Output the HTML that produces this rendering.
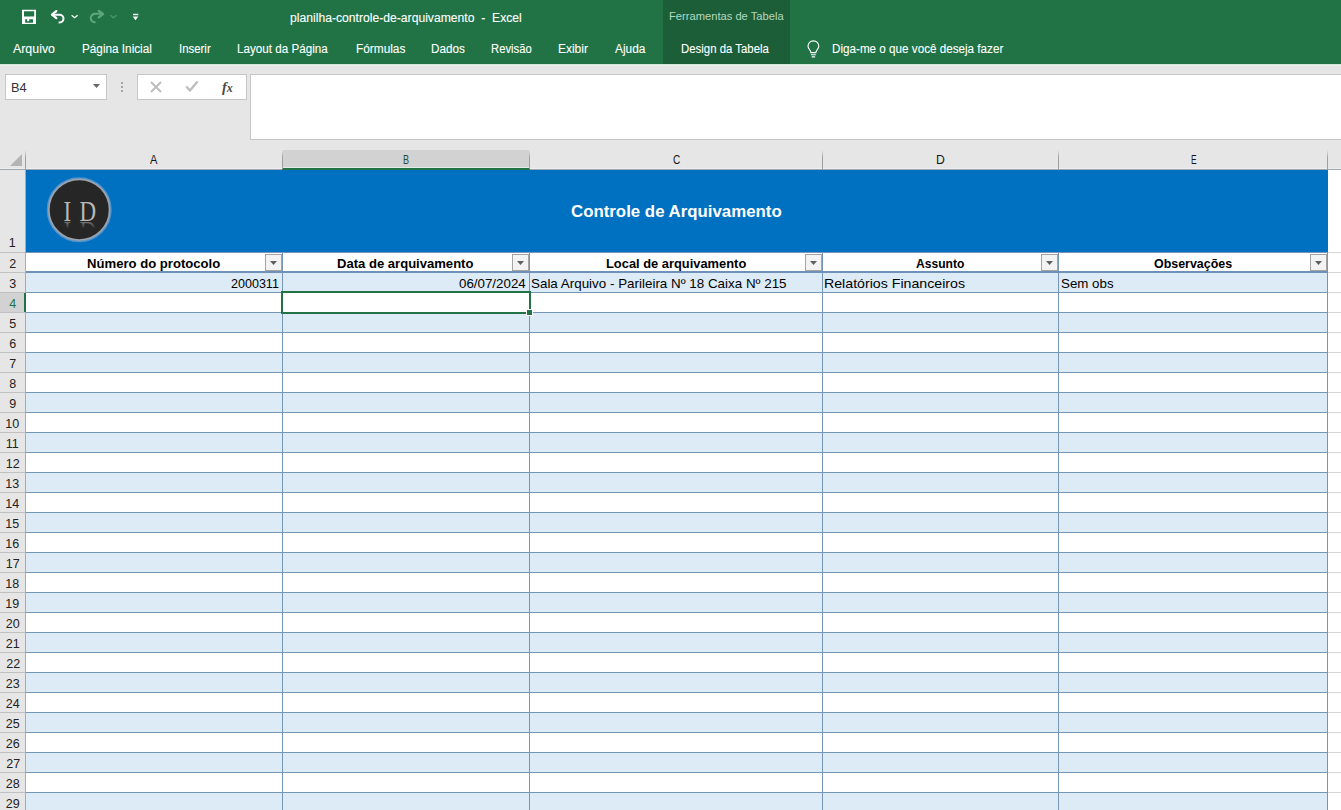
<!DOCTYPE html>
<html><head><meta charset="utf-8"><style>
*{margin:0;padding:0;box-sizing:border-box}
html,body{width:1341px;height:810px;overflow:hidden;background:#fff;font-family:"Liberation Sans",sans-serif}
.a{position:absolute}
.t{position:absolute;white-space:pre;line-height:1;transform-origin:0 0}
</style></head><body>

<div class="a" style="left:0;top:0;width:1341px;height:64px;background:#217346"></div>
<div class="a" style="left:663px;top:0;width:127px;height:64px;background:#1c5e38"></div>
<div class="a" style="left:0;top:64px;width:1341px;height:106px;background:#e6e6e6"></div>
<div class="a" style="left:0;top:64px;width:1341px;height:1px;background:#d5e6da"></div>
<div class="a" style="left:0;top:65px;width:1341px;height:1px;background:#eaefeb"></div>
<div class="a" style="left:5px;top:74px;width:102px;height:26px;background:#fff;border:1px solid #c6c6c6"></div>
<svg class="a" style="left:93px;top:84px" width="7" height="4"><path d="M0 0H7L3.5 4Z" fill="#666"/></svg>
<div class="a" style="left:121px;top:82px;width:2px;height:2px;background:#a6a6a6"></div>
<div class="a" style="left:121px;top:86px;width:2px;height:2px;background:#a6a6a6"></div>
<div class="a" style="left:121px;top:90px;width:2px;height:2px;background:#a6a6a6"></div>
<div class="a" style="left:137px;top:74px;width:110px;height:26px;background:#fff;border:1px solid #c6c6c6"></div>
<svg class="a" style="left:150px;top:81px" width="12" height="12"><path d="M1 1L11 11M11 1L1 11" stroke="#bdbdbd" stroke-width="2"/></svg>
<svg class="a" style="left:185px;top:80px" width="14" height="13"><path d="M1.2 6.5L5 10.5L12.5 1.5" stroke="#bdbdbd" stroke-width="2.4" fill="none"/></svg>
<div class="t" style="left:222px;top:79.5px;font-family:'Liberation Serif',serif;font-style:italic;font-weight:700;font-size:14.5px;color:#4a4a4a">f<span style="font-size:12px;letter-spacing:0">x</span></div>
<div class="a" style="left:250px;top:74px;width:1091px;height:66px;background:#fff;border:1px solid #c6c6c6;border-right:none"></div>
<div class="a" style="left:282px;top:150px;width:248px;height:17px;background:#d2d2d2"></div>
<div class="a" style="left:0;top:168px;width:1341px;height:1px;background:#efefef"></div>
<div class="a" style="left:0;top:169px;width:1341px;height:1px;background:#9fa6ad"></div>
<div class="a" style="left:282px;top:167px;width:248px;height:1px;background:#e4ece6"></div>
<div class="a" style="left:282px;top:168px;width:248px;height:2px;background:#217346"></div>
<div class="a" style="left:25px;top:150px;width:1px;height:19px;background:linear-gradient(#e6e6e6,#9f9f9f 40%,#9f9f9f)"></div>
<div class="a" style="left:282px;top:150px;width:1px;height:19px;background:linear-gradient(#e6e6e6,#9f9f9f 40%,#9f9f9f)"></div>
<div class="a" style="left:529px;top:150px;width:1px;height:19px;background:linear-gradient(#e6e6e6,#9f9f9f 40%,#9f9f9f)"></div>
<div class="a" style="left:822px;top:150px;width:1px;height:19px;background:linear-gradient(#e6e6e6,#9f9f9f 40%,#9f9f9f)"></div>
<div class="a" style="left:1058px;top:150px;width:1px;height:19px;background:linear-gradient(#e6e6e6,#9f9f9f 40%,#9f9f9f)"></div>
<div class="a" style="left:1327px;top:150px;width:1px;height:19px;background:linear-gradient(#e6e6e6,#9f9f9f 40%,#9f9f9f)"></div>
<svg class="a" style="left:10px;top:154px" width="12" height="12"><path d="M12 0V12H0Z" fill="#b4b4b4"/></svg>
<div class="a" style="left:0;top:170px;width:25px;height:640px;background:#e6e6e6"></div>
<div class="a" style="left:25px;top:170px;width:1px;height:640px;background:#ababab"></div>
<div class="a" style="left:1328px;top:170px;width:13px;height:640px;background:#fff"></div>
<div class="a" style="left:26px;top:170px;width:1302px;height:83px;background:#0070c0"></div>
<div class="a" style="left:0;top:252px;width:25px;height:1px;background:#c0c0c0"></div>
<div class="a" style="left:1328px;top:252px;width:13px;height:1px;background:#d4d4d4"></div>
<div class="a" style="left:26px;top:253px;width:1302px;height:19px;background:#fff"></div>
<div class="a" style="left:26px;top:272px;width:1302px;height:1px;background:#7596b5"></div>
<div class="a" style="left:0;top:272px;width:25px;height:1px;background:#c0c0c0"></div>
<div class="a" style="left:1328px;top:272px;width:13px;height:1px;background:#d4d4d4"></div>
<div class="a" style="left:26px;top:273px;width:1302px;height:19px;background:#ddebf7"></div>
<div class="a" style="left:26px;top:292px;width:1302px;height:1px;background:#7596b5"></div>
<div class="a" style="left:0;top:292px;width:25px;height:1px;background:#c0c0c0"></div>
<div class="a" style="left:1328px;top:292px;width:13px;height:1px;background:#d4d4d4"></div>
<div class="a" style="left:26px;top:293px;width:1302px;height:19px;background:#fff"></div>
<div class="a" style="left:26px;top:312px;width:1302px;height:1px;background:#7596b5"></div>
<div class="a" style="left:0;top:312px;width:25px;height:1px;background:#c0c0c0"></div>
<div class="a" style="left:1328px;top:312px;width:13px;height:1px;background:#d4d4d4"></div>
<div class="a" style="left:26px;top:313px;width:1302px;height:19px;background:#ddebf7"></div>
<div class="a" style="left:26px;top:332px;width:1302px;height:1px;background:#7596b5"></div>
<div class="a" style="left:0;top:332px;width:25px;height:1px;background:#c0c0c0"></div>
<div class="a" style="left:1328px;top:332px;width:13px;height:1px;background:#d4d4d4"></div>
<div class="a" style="left:26px;top:333px;width:1302px;height:19px;background:#fff"></div>
<div class="a" style="left:26px;top:352px;width:1302px;height:1px;background:#7596b5"></div>
<div class="a" style="left:0;top:352px;width:25px;height:1px;background:#c0c0c0"></div>
<div class="a" style="left:1328px;top:352px;width:13px;height:1px;background:#d4d4d4"></div>
<div class="a" style="left:26px;top:353px;width:1302px;height:19px;background:#ddebf7"></div>
<div class="a" style="left:26px;top:372px;width:1302px;height:1px;background:#7596b5"></div>
<div class="a" style="left:0;top:372px;width:25px;height:1px;background:#c0c0c0"></div>
<div class="a" style="left:1328px;top:372px;width:13px;height:1px;background:#d4d4d4"></div>
<div class="a" style="left:26px;top:373px;width:1302px;height:19px;background:#fff"></div>
<div class="a" style="left:26px;top:392px;width:1302px;height:1px;background:#7596b5"></div>
<div class="a" style="left:0;top:392px;width:25px;height:1px;background:#c0c0c0"></div>
<div class="a" style="left:1328px;top:392px;width:13px;height:1px;background:#d4d4d4"></div>
<div class="a" style="left:26px;top:393px;width:1302px;height:19px;background:#ddebf7"></div>
<div class="a" style="left:26px;top:412px;width:1302px;height:1px;background:#7596b5"></div>
<div class="a" style="left:0;top:412px;width:25px;height:1px;background:#c0c0c0"></div>
<div class="a" style="left:1328px;top:412px;width:13px;height:1px;background:#d4d4d4"></div>
<div class="a" style="left:26px;top:413px;width:1302px;height:19px;background:#fff"></div>
<div class="a" style="left:26px;top:432px;width:1302px;height:1px;background:#7596b5"></div>
<div class="a" style="left:0;top:432px;width:25px;height:1px;background:#c0c0c0"></div>
<div class="a" style="left:1328px;top:432px;width:13px;height:1px;background:#d4d4d4"></div>
<div class="a" style="left:26px;top:433px;width:1302px;height:19px;background:#ddebf7"></div>
<div class="a" style="left:26px;top:452px;width:1302px;height:1px;background:#7596b5"></div>
<div class="a" style="left:0;top:452px;width:25px;height:1px;background:#c0c0c0"></div>
<div class="a" style="left:1328px;top:452px;width:13px;height:1px;background:#d4d4d4"></div>
<div class="a" style="left:26px;top:453px;width:1302px;height:19px;background:#fff"></div>
<div class="a" style="left:26px;top:472px;width:1302px;height:1px;background:#7596b5"></div>
<div class="a" style="left:0;top:472px;width:25px;height:1px;background:#c0c0c0"></div>
<div class="a" style="left:1328px;top:472px;width:13px;height:1px;background:#d4d4d4"></div>
<div class="a" style="left:26px;top:473px;width:1302px;height:19px;background:#ddebf7"></div>
<div class="a" style="left:26px;top:492px;width:1302px;height:1px;background:#7596b5"></div>
<div class="a" style="left:0;top:492px;width:25px;height:1px;background:#c0c0c0"></div>
<div class="a" style="left:1328px;top:492px;width:13px;height:1px;background:#d4d4d4"></div>
<div class="a" style="left:26px;top:493px;width:1302px;height:19px;background:#fff"></div>
<div class="a" style="left:26px;top:512px;width:1302px;height:1px;background:#7596b5"></div>
<div class="a" style="left:0;top:512px;width:25px;height:1px;background:#c0c0c0"></div>
<div class="a" style="left:1328px;top:512px;width:13px;height:1px;background:#d4d4d4"></div>
<div class="a" style="left:26px;top:513px;width:1302px;height:19px;background:#ddebf7"></div>
<div class="a" style="left:26px;top:532px;width:1302px;height:1px;background:#7596b5"></div>
<div class="a" style="left:0;top:532px;width:25px;height:1px;background:#c0c0c0"></div>
<div class="a" style="left:1328px;top:532px;width:13px;height:1px;background:#d4d4d4"></div>
<div class="a" style="left:26px;top:533px;width:1302px;height:19px;background:#fff"></div>
<div class="a" style="left:26px;top:552px;width:1302px;height:1px;background:#7596b5"></div>
<div class="a" style="left:0;top:552px;width:25px;height:1px;background:#c0c0c0"></div>
<div class="a" style="left:1328px;top:552px;width:13px;height:1px;background:#d4d4d4"></div>
<div class="a" style="left:26px;top:553px;width:1302px;height:19px;background:#ddebf7"></div>
<div class="a" style="left:26px;top:572px;width:1302px;height:1px;background:#7596b5"></div>
<div class="a" style="left:0;top:572px;width:25px;height:1px;background:#c0c0c0"></div>
<div class="a" style="left:1328px;top:572px;width:13px;height:1px;background:#d4d4d4"></div>
<div class="a" style="left:26px;top:573px;width:1302px;height:19px;background:#fff"></div>
<div class="a" style="left:26px;top:592px;width:1302px;height:1px;background:#7596b5"></div>
<div class="a" style="left:0;top:592px;width:25px;height:1px;background:#c0c0c0"></div>
<div class="a" style="left:1328px;top:592px;width:13px;height:1px;background:#d4d4d4"></div>
<div class="a" style="left:26px;top:593px;width:1302px;height:19px;background:#ddebf7"></div>
<div class="a" style="left:26px;top:612px;width:1302px;height:1px;background:#7596b5"></div>
<div class="a" style="left:0;top:612px;width:25px;height:1px;background:#c0c0c0"></div>
<div class="a" style="left:1328px;top:612px;width:13px;height:1px;background:#d4d4d4"></div>
<div class="a" style="left:26px;top:613px;width:1302px;height:19px;background:#fff"></div>
<div class="a" style="left:26px;top:632px;width:1302px;height:1px;background:#7596b5"></div>
<div class="a" style="left:0;top:632px;width:25px;height:1px;background:#c0c0c0"></div>
<div class="a" style="left:1328px;top:632px;width:13px;height:1px;background:#d4d4d4"></div>
<div class="a" style="left:26px;top:633px;width:1302px;height:19px;background:#ddebf7"></div>
<div class="a" style="left:26px;top:652px;width:1302px;height:1px;background:#7596b5"></div>
<div class="a" style="left:0;top:652px;width:25px;height:1px;background:#c0c0c0"></div>
<div class="a" style="left:1328px;top:652px;width:13px;height:1px;background:#d4d4d4"></div>
<div class="a" style="left:26px;top:653px;width:1302px;height:19px;background:#fff"></div>
<div class="a" style="left:26px;top:672px;width:1302px;height:1px;background:#7596b5"></div>
<div class="a" style="left:0;top:672px;width:25px;height:1px;background:#c0c0c0"></div>
<div class="a" style="left:1328px;top:672px;width:13px;height:1px;background:#d4d4d4"></div>
<div class="a" style="left:26px;top:673px;width:1302px;height:19px;background:#ddebf7"></div>
<div class="a" style="left:26px;top:692px;width:1302px;height:1px;background:#7596b5"></div>
<div class="a" style="left:0;top:692px;width:25px;height:1px;background:#c0c0c0"></div>
<div class="a" style="left:1328px;top:692px;width:13px;height:1px;background:#d4d4d4"></div>
<div class="a" style="left:26px;top:693px;width:1302px;height:19px;background:#fff"></div>
<div class="a" style="left:26px;top:712px;width:1302px;height:1px;background:#7596b5"></div>
<div class="a" style="left:0;top:712px;width:25px;height:1px;background:#c0c0c0"></div>
<div class="a" style="left:1328px;top:712px;width:13px;height:1px;background:#d4d4d4"></div>
<div class="a" style="left:26px;top:713px;width:1302px;height:19px;background:#ddebf7"></div>
<div class="a" style="left:26px;top:732px;width:1302px;height:1px;background:#7596b5"></div>
<div class="a" style="left:0;top:732px;width:25px;height:1px;background:#c0c0c0"></div>
<div class="a" style="left:1328px;top:732px;width:13px;height:1px;background:#d4d4d4"></div>
<div class="a" style="left:26px;top:733px;width:1302px;height:19px;background:#fff"></div>
<div class="a" style="left:26px;top:752px;width:1302px;height:1px;background:#7596b5"></div>
<div class="a" style="left:0;top:752px;width:25px;height:1px;background:#c0c0c0"></div>
<div class="a" style="left:1328px;top:752px;width:13px;height:1px;background:#d4d4d4"></div>
<div class="a" style="left:26px;top:753px;width:1302px;height:19px;background:#ddebf7"></div>
<div class="a" style="left:26px;top:772px;width:1302px;height:1px;background:#7596b5"></div>
<div class="a" style="left:0;top:772px;width:25px;height:1px;background:#c0c0c0"></div>
<div class="a" style="left:1328px;top:772px;width:13px;height:1px;background:#d4d4d4"></div>
<div class="a" style="left:26px;top:773px;width:1302px;height:19px;background:#fff"></div>
<div class="a" style="left:26px;top:792px;width:1302px;height:1px;background:#7596b5"></div>
<div class="a" style="left:0;top:792px;width:25px;height:1px;background:#c0c0c0"></div>
<div class="a" style="left:1328px;top:792px;width:13px;height:1px;background:#d4d4d4"></div>
<div class="a" style="left:26px;top:793px;width:1302px;height:19px;background:#ddebf7"></div>
<div class="a" style="left:26px;top:812px;width:1302px;height:1px;background:#7596b5"></div>
<div class="a" style="left:0;top:812px;width:25px;height:1px;background:#c0c0c0"></div>
<div class="a" style="left:1328px;top:812px;width:13px;height:1px;background:#d4d4d4"></div>
<div class="a" style="left:26px;top:813px;width:1302px;height:19px;background:#fff"></div>
<div class="a" style="left:26px;top:832px;width:1302px;height:1px;background:#7596b5"></div>
<div class="a" style="left:0;top:832px;width:25px;height:1px;background:#c0c0c0"></div>
<div class="a" style="left:1328px;top:832px;width:13px;height:1px;background:#d4d4d4"></div>
<div class="a" style="left:282px;top:253px;width:1px;height:557px;background:#7596b5"></div>
<div class="a" style="left:529px;top:253px;width:1px;height:557px;background:#7596b5"></div>
<div class="a" style="left:822px;top:253px;width:1px;height:557px;background:#7596b5"></div>
<div class="a" style="left:1058px;top:253px;width:1px;height:557px;background:#7596b5"></div>
<div class="a" style="left:1327px;top:253px;width:1px;height:557px;background:#7596b5"></div>
<div class="a" style="left:26px;top:252px;width:1302px;height:1px;background:#7596b5"></div>
<div class="a" style="left:26px;top:271px;width:1302px;height:2px;background:#6e90b9"></div>
<div class="a" style="left:0;top:293px;width:25px;height:19px;background:#d2d2d2"></div>
<div class="a" style="left:24px;top:293px;width:2px;height:19px;background:#217346"></div>
<div class="a" style="left:265px;top:254px;width:17px;height:17px;background:#f3f3f3;border:1px solid #a4a4a4"></div>
<svg class="a" style="left:270px;top:261px" width="7" height="4"><path d="M0 0H7L3.5 4Z" fill="#606060"/></svg>
<div class="a" style="left:512px;top:254px;width:17px;height:17px;background:#f3f3f3;border:1px solid #a4a4a4"></div>
<svg class="a" style="left:517px;top:261px" width="7" height="4"><path d="M0 0H7L3.5 4Z" fill="#606060"/></svg>
<div class="a" style="left:805px;top:254px;width:17px;height:17px;background:#f3f3f3;border:1px solid #a4a4a4"></div>
<svg class="a" style="left:810px;top:261px" width="7" height="4"><path d="M0 0H7L3.5 4Z" fill="#606060"/></svg>
<div class="a" style="left:1041px;top:254px;width:17px;height:17px;background:#f3f3f3;border:1px solid #a4a4a4"></div>
<svg class="a" style="left:1046px;top:261px" width="7" height="4"><path d="M0 0H7L3.5 4Z" fill="#606060"/></svg>
<div class="a" style="left:1310px;top:254px;width:17px;height:17px;background:#f3f3f3;border:1px solid #a4a4a4"></div>
<svg class="a" style="left:1315px;top:261px" width="7" height="4"><path d="M0 0H7L3.5 4Z" fill="#606060"/></svg>
<div class="a" style="left:281px;top:291px;width:250px;height:23px;border:2px solid #217346"></div>
<div class="a" style="left:526px;top:309px;width:7px;height:7px;background:#fff"></div>
<div class="a" style="left:527px;top:310px;width:5px;height:5px;background:#217346"></div>
<svg class="a" style="left:46px;top:177px" width="66" height="66" viewBox="0 0 66 66">
<defs><linearGradient id="rf" x1="0" y1="0" x2="0" y2="1"><stop offset="0" stop-color="#9a9a9a" stop-opacity=".7"/><stop offset="1" stop-color="#9a9a9a" stop-opacity="0"/></linearGradient></defs>
<circle cx="33.2" cy="32.7" r="31.6" fill="none" stroke="#4f93cf" stroke-width="1.8"/>
<circle cx="33.2" cy="32.7" r="30.4" fill="#262626" stroke="#98a3ad" stroke-width="1.8"/>
</svg>
<svg class="a" style="left:46px;top:177px" width="66" height="66" viewBox="0 0 66 66">
<defs><linearGradient id="fd" gradientUnits="userSpaceOnUse" x1="0" y1="0" x2="0" y2="-7"><stop offset="0" stop-color="#9a9a9a" stop-opacity=".75"/><stop offset="1" stop-color="#9a9a9a" stop-opacity="0"/></linearGradient></defs>
<g font-family="Liberation Serif" font-size="29.5" fill="#b8b8b8">
<text x="0" y="0" transform="translate(17.4,44) scale(0.78,1)">I</text>
<text x="0" y="0" transform="translate(33.6,44) scale(0.78,1)">D</text>
</g>
<g font-family="Liberation Serif" font-size="29.5" fill="url(#fd)" transform="translate(0,88.5) scale(1,-1)">
<text x="0" y="0" transform="translate(17.4,44) scale(0.78,1)">I</text>
<text x="0" y="0" transform="translate(33.6,44) scale(0.78,1)">D</text>
</g>
</svg>
<svg class="a" style="left:0;top:0" width="160" height="32" viewBox="0 0 160 32">
<path fill-rule="evenodd" fill="#fff" d="M22 9.7H36V24H22Z M24 11.2H34.2V16.6H24Z M25.2 19.2H27.2V21.3H29.2V19.2H33V22.8H25.2Z"/>
<path d="M56.3 11.1L52 14.7L56.3 18.1" fill="none" stroke="#fff" stroke-width="2.3" stroke-linejoin="round" stroke-linecap="round"/>
<path d="M52.8 14.7H59.6A3.9 3.9 0 0 1 59.6 22.5H58.6" fill="none" stroke="#fff" stroke-width="2"/>
<path d="M71.6 15.2L74.6 17.8L77.6 15.2" fill="none" stroke="#fff" stroke-width="1.2"/>
<path d="M98.8 10.9L103 14L98.8 17.3" fill="none" stroke="#5ea67c" stroke-width="2.3" stroke-linejoin="round" stroke-linecap="round"/>
<path d="M102.5 13.7H95A4.4 4.4 0 0 0 92.5 21.6L95.5 22.5" fill="none" stroke="#5ea67c" stroke-width="1.9"/>
<path d="M110.4 15.2L113.4 17.8L116.4 15.2" fill="none" stroke="#4f9a6c" stroke-width="1.2"/>
<path d="M133 13.8H138.3V15.2H133Z" fill="#fff"/>
<path d="M132.7 16.6H138.3L135.5 20.2Z" fill="#fff"/>
</svg>
<svg class="a" style="left:0;top:1px" width="830" height="64" viewBox="0 0 830 64">
<path d="M810.9 51.6C810.9 49.3 808 47.9 808 45.3A5.4 5.4 0 0 1 818.8 45.3C818.8 47.9 815.9 49.3 815.9 51.6Z" fill="none" stroke="#fff" stroke-width="1.1"/>
<path d="M811 53.8H815.8M811.7 55.9H815.1" stroke="#fff" stroke-width="1.1"/>
</svg>
<div class="t" style="left:290.20px;top:12.42px;font-size:12.5px;font-weight:400;color:#fff;transform:scaleX(0.9725);-webkit-text-stroke:0.1px #fff;">planilha-controle-de-arquivamento  -  Excel</div>
<div class="t" style="left:669.38px;top:11.37px;font-size:11.5px;font-weight:400;color:#b3d8c0;transform:scaleX(0.9710);">Ferramentas de Tabela</div>
<div class="t" style="left:13.40px;top:43.12px;font-size:12.5px;font-weight:400;color:#fff;transform:scaleX(0.9898);-webkit-text-stroke:0.1px #fff;">Arquivo</div>
<div class="t" style="left:81.86px;top:43.12px;font-size:12.5px;font-weight:400;color:#fff;transform:scaleX(0.9398);-webkit-text-stroke:0.1px #fff;">Página Inicial</div>
<div class="t" style="left:178.67px;top:43.12px;font-size:12.5px;font-weight:400;color:#fff;transform:scaleX(0.9123);-webkit-text-stroke:0.1px #fff;">Inserir</div>
<div class="t" style="left:237.07px;top:43.12px;font-size:12.5px;font-weight:400;color:#fff;transform:scaleX(0.9321);-webkit-text-stroke:0.1px #fff;">Layout da Página</div>
<div class="t" style="left:355.65px;top:43.12px;font-size:12.5px;font-weight:400;color:#fff;transform:scaleX(0.9481);-webkit-text-stroke:0.1px #fff;">Fórmulas</div>
<div class="t" style="left:431.45px;top:43.12px;font-size:12.5px;font-weight:400;color:#fff;transform:scaleX(0.9349);-webkit-text-stroke:0.1px #fff;">Dados</div>
<div class="t" style="left:491.31px;top:43.12px;font-size:12.5px;font-weight:400;color:#fff;transform:scaleX(0.9005);-webkit-text-stroke:0.1px #fff;">Revisão</div>
<div class="t" style="left:557.83px;top:43.12px;font-size:12.5px;font-weight:400;color:#fff;transform:scaleX(0.9574);-webkit-text-stroke:0.1px #fff;">Exibir</div>
<div class="t" style="left:615.21px;top:43.12px;font-size:12.5px;font-weight:400;color:#fff;transform:scaleX(0.9501);-webkit-text-stroke:0.1px #fff;">Ajuda</div>
<div class="t" style="left:681.08px;top:43.12px;font-size:12.5px;font-weight:400;color:#fff;transform:scaleX(0.9118);-webkit-text-stroke:0.1px #fff;">Design da Tabela</div>
<div class="t" style="left:832.47px;top:43.12px;font-size:12.5px;font-weight:400;color:#fff;transform:scaleX(0.9338);-webkit-text-stroke:0.1px #fff;">Diga-me o que você deseja fazer</div>
<div class="t" style="left:11.35px;top:82.42px;font-size:12.5px;font-weight:400;color:#333;transform:scaleX(1.0201);">B4</div>
<div class="t" style="left:149.60px;top:154.12px;font-size:12.5px;font-weight:400;color:#151515;transform:scaleX(0.8889);">A</div>
<div class="t" style="left:403.39px;top:154.12px;font-size:12.5px;font-weight:400;color:#234a32;transform:scaleX(0.7262);">B</div>
<div class="t" style="left:673.00px;top:154.12px;font-size:12.5px;font-weight:400;color:#151515;transform:scaleX(0.8081);">C</div>
<div class="t" style="left:936.02px;top:154.12px;font-size:12.5px;font-weight:400;color:#151515;transform:scaleX(0.9794);">D</div>
<div class="t" style="left:1190.81px;top:154.12px;font-size:12.5px;font-weight:400;color:#151515;transform:scaleX(0.6748);">E</div>
<div class="t" style="left:571.40px;top:202.83px;font-size:16.5px;font-weight:700;color:#fff;transform:scaleX(1.0198);">Controle de Arquivamento</div>
<div class="t" style="left:87.39px;top:257.07px;font-size:13.5px;font-weight:700;color:#000;transform:scaleX(0.9709);">Número do protocolo</div>
<div class="t" style="left:337.39px;top:257.07px;font-size:13.5px;font-weight:700;color:#000;transform:scaleX(0.9674);">Data de arquivamento</div>
<div class="t" style="left:605.60px;top:257.07px;font-size:13.5px;font-weight:700;color:#000;transform:scaleX(0.9538);">Local de arquivamento</div>
<div class="t" style="left:916.40px;top:257.07px;font-size:13.5px;font-weight:700;color:#000;transform:scaleX(0.8968);">Assunto</div>
<div class="t" style="left:1153.80px;top:257.07px;font-size:13.5px;font-weight:700;color:#000;transform:scaleX(0.9207);">Observações</div>
<div class="t" style="left:231.41px;top:276.97px;font-size:13.5px;font-weight:400;color:#000;transform:scaleX(0.9287);">2000311</div>
<div class="t" style="left:458.81px;top:276.97px;font-size:13.5px;font-weight:400;color:#000;transform:scaleX(0.9875);">06/07/2024</div>
<div class="t" style="left:530.79px;top:276.97px;font-size:13.5px;font-weight:400;color:#000;transform:scaleX(0.9926);">Sala Arquivo - Parileira Nº 18 Caixa Nº 215</div>
<div class="t" style="left:824.35px;top:276.97px;font-size:13.5px;font-weight:400;color:#000;transform:scaleX(1.0498);">Relatórios Financeiros</div>
<div class="t" style="left:1060.58px;top:276.97px;font-size:13.5px;font-weight:400;color:#000;transform:scaleX(0.9872);">Sem obs</div>
<div class="t" style="left:8.70px;top:236.92px;font-size:12.5px;font-weight:400;color:#222;">1</div>
<div class="t" style="left:9.20px;top:257.52px;font-size:12.5px;font-weight:400;color:#222;">2</div>
<div class="t" style="left:9.20px;top:277.52px;font-size:12.5px;font-weight:400;color:#222;">3</div>
<div class="t" style="left:9.20px;top:297.52px;font-size:12.5px;font-weight:400;color:#217346;">4</div>
<div class="t" style="left:9.20px;top:317.52px;font-size:12.5px;font-weight:400;color:#222;">5</div>
<div class="t" style="left:9.20px;top:337.52px;font-size:12.5px;font-weight:400;color:#222;">6</div>
<div class="t" style="left:9.20px;top:357.52px;font-size:12.5px;font-weight:400;color:#222;">7</div>
<div class="t" style="left:9.20px;top:377.52px;font-size:12.5px;font-weight:400;color:#222;">8</div>
<div class="t" style="left:9.20px;top:397.52px;font-size:12.5px;font-weight:400;color:#222;">9</div>
<div class="t" style="left:5.22px;top:417.52px;font-size:12.5px;font-weight:400;color:#222;">10</div>
<div class="t" style="left:5.69px;top:437.52px;font-size:12.5px;font-weight:400;color:#222;">11</div>
<div class="t" style="left:5.72px;top:457.52px;font-size:12.5px;font-weight:400;color:#222;">12</div>
<div class="t" style="left:5.22px;top:477.52px;font-size:12.5px;font-weight:400;color:#222;">13</div>
<div class="t" style="left:5.22px;top:497.52px;font-size:12.5px;font-weight:400;color:#222;">14</div>
<div class="t" style="left:5.22px;top:517.52px;font-size:12.5px;font-weight:400;color:#222;">15</div>
<div class="t" style="left:5.22px;top:537.52px;font-size:12.5px;font-weight:400;color:#222;">16</div>
<div class="t" style="left:5.72px;top:557.52px;font-size:12.5px;font-weight:400;color:#222;">17</div>
<div class="t" style="left:5.22px;top:577.52px;font-size:12.5px;font-weight:400;color:#222;">18</div>
<div class="t" style="left:5.22px;top:597.52px;font-size:12.5px;font-weight:400;color:#222;">19</div>
<div class="t" style="left:5.72px;top:617.52px;font-size:12.5px;font-weight:400;color:#222;">20</div>
<div class="t" style="left:5.72px;top:637.52px;font-size:12.5px;font-weight:400;color:#222;">21</div>
<div class="t" style="left:6.22px;top:657.52px;font-size:12.5px;font-weight:400;color:#222;">22</div>
<div class="t" style="left:5.72px;top:677.52px;font-size:12.5px;font-weight:400;color:#222;">23</div>
<div class="t" style="left:5.72px;top:697.52px;font-size:12.5px;font-weight:400;color:#222;">24</div>
<div class="t" style="left:5.72px;top:717.52px;font-size:12.5px;font-weight:400;color:#222;">25</div>
<div class="t" style="left:5.72px;top:737.52px;font-size:12.5px;font-weight:400;color:#222;">26</div>
<div class="t" style="left:6.22px;top:757.52px;font-size:12.5px;font-weight:400;color:#222;">27</div>
<div class="t" style="left:5.72px;top:777.52px;font-size:12.5px;font-weight:400;color:#222;">28</div>
<div class="t" style="left:5.72px;top:797.52px;font-size:12.5px;font-weight:400;color:#222;">29</div>
<div class="t" style="left:5.72px;top:817.52px;font-size:12.5px;font-weight:400;color:#222;">30</div>
</body></html>
